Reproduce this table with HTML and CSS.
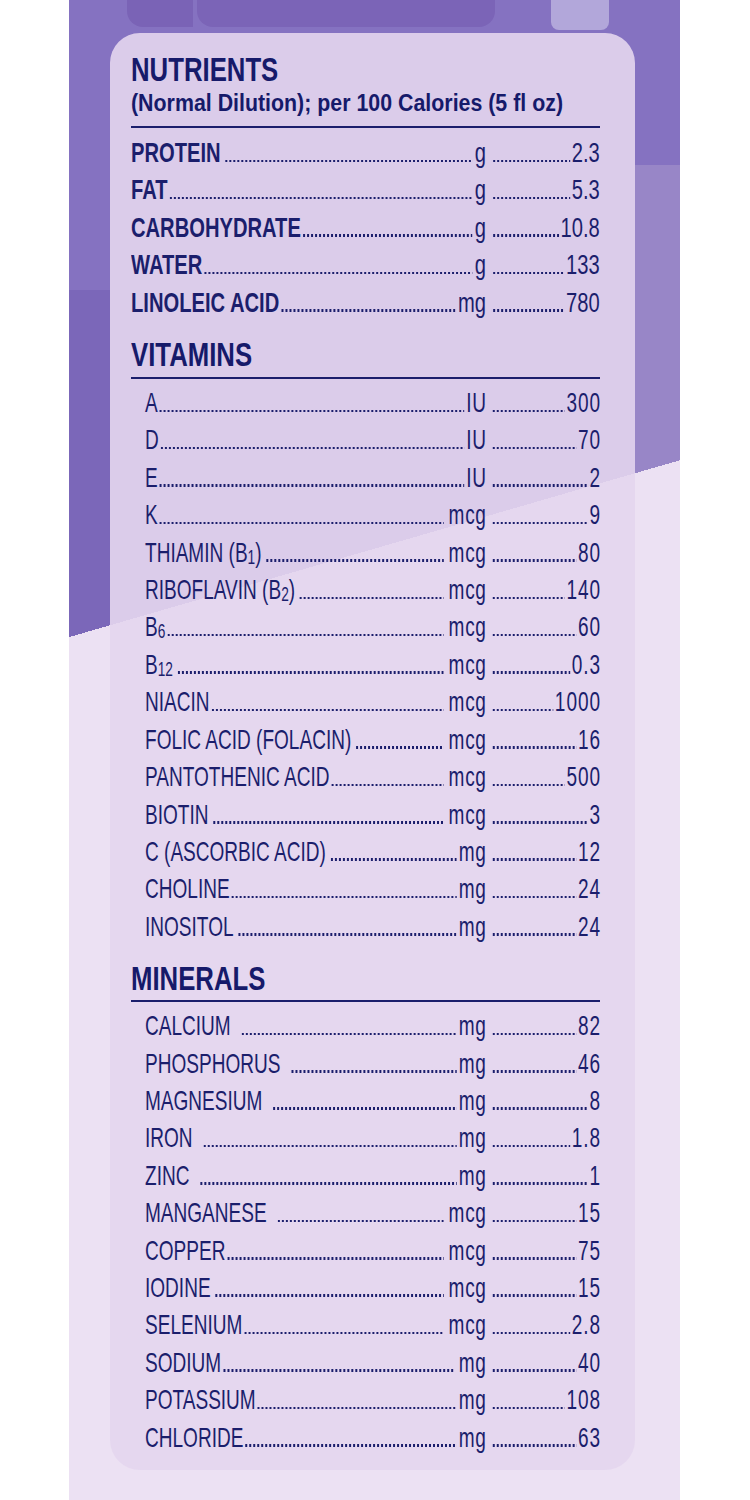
FILE: index.html
```html
<!DOCTYPE html>
<html lang="en">
<head>
<meta charset="utf-8">
<title>Nutrients</title>
<link rel="stylesheet" href="styles.css">
</head>
<body>
<div class="strip">
  <div class="deco"><span class="d1"></span><span class="d2"></span><span class="d3"></span></div>
  <div class="panel">
    <section class="sec first">
      <div class="head head-main">
        <h2>NUTRIENTS</h2>
        <p class="sub">(Normal Dilution); per 100 Calories (5 fl oz)</p>
      </div>
      <ul class="list bold">
        <li class="row"><span class="left"><span class="lbl">PROTEIN</span><span class="dots sp"></span><span class="unit">g</span></span><span class="right"><span class="dots"></span><span class="val">2.3</span></span></li>
        <li class="row"><span class="left"><span class="lbl">FAT</span><span class="dots"></span><span class="unit">g</span></span><span class="right"><span class="dots"></span><span class="val">5.3</span></span></li>
        <li class="row"><span class="left"><span class="lbl">CARBOHYDRATE</span><span class="dots"></span><span class="unit">g</span></span><span class="right"><span class="dots"></span><span class="val">10.8</span></span></li>
        <li class="row"><span class="left"><span class="lbl">WATER</span><span class="dots"></span><span class="unit">g</span></span><span class="right"><span class="dots"></span><span class="val">133</span></span></li>
        <li class="row"><span class="left"><span class="lbl">LINOLEIC ACID</span><span class="dots"></span><span class="unit">mg</span></span><span class="right"><span class="dots"></span><span class="val">780</span></span></li>
      </ul>
    </section>

    <section class="sec">
      <div class="head"><h2>VITAMINS</h2></div>
      <ul class="list ind">
        <li class="row"><span class="left"><span class="lbl">A</span><span class="dots"></span><span class="unit">IU</span></span><span class="right"><span class="dots"></span><span class="val">300</span></span></li>
        <li class="row"><span class="left"><span class="lbl">D</span><span class="dots"></span><span class="unit">IU</span></span><span class="right"><span class="dots"></span><span class="val">70</span></span></li>
        <li class="row"><span class="left"><span class="lbl">E</span><span class="dots"></span><span class="unit">IU</span></span><span class="right"><span class="dots"></span><span class="val">2</span></span></li>
        <li class="row"><span class="left"><span class="lbl">K</span><span class="dots u-sp"></span><span class="unit">mcg</span></span><span class="right"><span class="dots"></span><span class="val">9</span></span></li>
        <li class="row"><span class="left"><span class="lbl">THIAMIN (B<sub class="s">1</sub>)</span><span class="dots sp u-sp"></span><span class="unit">mcg</span></span><span class="right"><span class="dots"></span><span class="val">80</span></span></li>
        <li class="row"><span class="left"><span class="lbl">RIBOFLAVIN (B<sub class="s">2</sub>)</span><span class="dots sp u-sp"></span><span class="unit">mcg</span></span><span class="right"><span class="dots"></span><span class="val">140</span></span></li>
        <li class="row"><span class="left"><span class="lbl">B<sub class="s">6</sub></span><span class="dots u-sp"></span><span class="unit">mcg</span></span><span class="right"><span class="dots"></span><span class="val">60</span></span></li>
        <li class="row"><span class="left"><span class="lbl">B<sub class="s">12</sub></span><span class="dots sp u-sp"></span><span class="unit">mcg</span></span><span class="right"><span class="dots"></span><span class="val">0.3</span></span></li>
        <li class="row"><span class="left"><span class="lbl">NIACIN</span><span class="dots u-sp"></span><span class="unit">mcg</span></span><span class="right"><span class="dots"></span><span class="val">1000</span></span></li>
        <li class="row"><span class="left"><span class="lbl">FOLIC ACID (FOLACIN)</span><span class="dots sp u-sp"></span><span class="unit">mcg</span></span><span class="right"><span class="dots"></span><span class="val">16</span></span></li>
        <li class="row"><span class="left"><span class="lbl">PANTOTHENIC ACID</span><span class="dots u-sp"></span><span class="unit">mcg</span></span><span class="right"><span class="dots"></span><span class="val">500</span></span></li>
        <li class="row"><span class="left"><span class="lbl">BIOTIN</span><span class="dots sp u-sp"></span><span class="unit">mcg</span></span><span class="right"><span class="dots"></span><span class="val">3</span></span></li>
        <li class="row"><span class="left"><span class="lbl">C (ASCORBIC ACID)</span><span class="dots sp"></span><span class="unit">mg</span></span><span class="right"><span class="dots"></span><span class="val">12</span></span></li>
        <li class="row"><span class="left"><span class="lbl">CHOLINE</span><span class="dots"></span><span class="unit">mg</span></span><span class="right"><span class="dots"></span><span class="val">24</span></span></li>
        <li class="row"><span class="left"><span class="lbl">INOSITOL</span><span class="dots sp"></span><span class="unit">mg</span></span><span class="right"><span class="dots"></span><span class="val">24</span></span></li>
      </ul>
    </section>

    <section class="sec">
      <div class="head head-min"><h2>MINERALS</h2></div>
      <ul class="list ind">
        <li class="row"><span class="left"><span class="lbl">CALCIUM</span><span class="dots wide"></span><span class="unit">mg</span></span><span class="right"><span class="dots"></span><span class="val">82</span></span></li>
        <li class="row"><span class="left"><span class="lbl">PHOSPHORUS</span><span class="dots wide"></span><span class="unit">mg</span></span><span class="right"><span class="dots"></span><span class="val">46</span></span></li>
        <li class="row"><span class="left"><span class="lbl">MAGNESIUM</span><span class="dots wide"></span><span class="unit">mg</span></span><span class="right"><span class="dots"></span><span class="val">8</span></span></li>
        <li class="row"><span class="left"><span class="lbl">IRON</span><span class="dots wide"></span><span class="unit">mg</span></span><span class="right"><span class="dots"></span><span class="val">1.8</span></span></li>
        <li class="row"><span class="left"><span class="lbl">ZINC</span><span class="dots wide"></span><span class="unit">mg</span></span><span class="right"><span class="dots"></span><span class="val">1</span></span></li>
        <li class="row"><span class="left"><span class="lbl">MANGANESE</span><span class="dots wide u-sp"></span><span class="unit">mcg</span></span><span class="right"><span class="dots"></span><span class="val">15</span></span></li>
        <li class="row"><span class="left"><span class="lbl">COPPER</span><span class="dots u-sp"></span><span class="unit">mcg</span></span><span class="right"><span class="dots"></span><span class="val">75</span></span></li>
        <li class="row"><span class="left"><span class="lbl">IODINE</span><span class="dots sp u-sp"></span><span class="unit">mcg</span></span><span class="right"><span class="dots"></span><span class="val">15</span></span></li>
        <li class="row"><span class="left"><span class="lbl">SELENIUM</span><span class="dots u-sp"></span><span class="unit">mcg</span></span><span class="right"><span class="dots"></span><span class="val">2.8</span></span></li>
        <li class="row"><span class="left"><span class="lbl">SODIUM</span><span class="dots u-sp"></span><span class="unit">mg</span></span><span class="right"><span class="dots"></span><span class="val">40</span></span></li>
        <li class="row"><span class="left"><span class="lbl">POTASSIUM</span><span class="dots"></span><span class="unit">mg</span></span><span class="right"><span class="dots"></span><span class="val">108</span></span></li>
        <li class="row"><span class="left"><span class="lbl">CHLORIDE</span><span class="dots"></span><span class="unit">mg</span></span><span class="right"><span class="dots"></span><span class="val">63</span></span></li>
      </ul>
    </section>
  </div>
</div>
</body>
</html>
```
FILE: styles.css
```css
html, body {
  margin: 0;
  padding: 0;
  background: #ffffff;
}

body {
  font-family: "Liberation Sans", Arial, sans-serif;
  color: #1b1e6c;
}

.strip {
  margin-left: 69px;
  width: 611px;
  height: 1500px;
  overflow: hidden;
  background:
    linear-gradient(163.85deg, rgba(236, 225, 243, 0) 0 612px, #ece1f3 612px),
    linear-gradient(#9886c7, #9886c7) 566px 165px / 45px 320px no-repeat,
    linear-gradient(#7b67b9, #7b67b9) 0 290px / 41px 360px no-repeat,
    #8572c1;
}

.deco {
  display: flex;
  align-items: flex-start;
  height: 27px;
  padding-left: 58px;
}

.d1 {
  width: 66px;
  height: 27px;
  background: #7a63b6;
  border-radius: 0 0 0 16px;
}

.d2 {
  width: 298px;
  height: 27px;
  margin-left: 4px;
  background: #7b64b7;
  border-radius: 0 0 16px 16px;
}

.d3 {
  width: 58px;
  height: 30px;
  margin-left: 56px;
  background: #b2a7da;
  border-radius: 0 0 8px 8px;
}

.panel {
  box-sizing: border-box;
  width: 525px;
  height: 1437px;
  margin: 6px 0 0 41px;
  padding: 20px 35px 0 21px;
  border-radius: 30px;
  background: rgba(228, 214, 238, 0.9);
}

.sec {
  margin-top: 17px;
}

.sec.first {
  margin-top: 0;
}

.head {
  border-bottom: 2px solid #1b1e6c;
  padding-bottom: 6px;
}

.head-main {
  padding-bottom: 11px;
}

.head-min {
  padding-bottom: 5px;
}

h2 {
  margin: 0;
  font-size: 33px;
  line-height: 33px;
  font-weight: 700;
  color: #161a6a;
  transform: scaleX(0.78);
  transform-origin: 0 0;
}

.sub {
  margin: 5px 0 0;
  width: 486px;
  font-size: 24px;
  line-height: 24px;
  font-weight: 700;
  white-space: nowrap;
  color: #161a6a;
  transform: scaleX(0.89);
  transform-origin: 0 0;
}

/* regular-weight lists: condensed a bit more */
.list {
  list-style: none;
  margin: 5px 0 0;
  padding: 0;
  width: 690px;
  font-size: 28px;
  line-height: 37.4px;
  transform: scaleX(0.68);
  transform-origin: 0 0;
}

.list.bold {
  width: 651px;
  margin-top: 6px;
  transform: scaleX(0.72);
}

.row {
  display: flex;
  align-items: baseline;
}

.left {
  flex: none;
  box-sizing: border-box;
  width: 522px;
  display: flex;
  align-items: baseline;
}

.bold .left {
  width: 493px;
}

.ind .left {
  padding-left: 20.6px;
}

.lbl {
  white-space: nowrap;
}

.bold .lbl {
  font-weight: 700;
}

.s {
  font-size: 0.72em;
  line-height: 0;
  vertical-align: -0.1em;
}

.dots {
  flex: 1;
  height: 2.5px;
  margin: 0 3px 0 2px;
  background-image: linear-gradient(to right, #1b1e6c 0 2.6px, rgba(27, 30, 108, 0) 2.6px);
  background-size: 5.882px 2.5px;
  background-repeat: repeat-x;
  background-position: 1px 0;
}

.bold .dots {
  background-size: 5.556px 2.5px;
}

.dots.sp {
  margin-left: 6px;
}

.dots.wide {
  margin-left: 15px;
}

.dots.u-sp {
  margin-right: 7px;
}

.unit {
  white-space: nowrap;
  letter-spacing: 1px;
  margin-right: -1px;
}

.right {
  flex: 1;
  display: flex;
  align-items: baseline;
}

.right .dots {
  margin: 0 2px 0 9px;
}

.val {
  white-space: nowrap;
  letter-spacing: 1.5px;
  margin-right: -1.5px;
}

.bold .val,
.bold .unit {
  letter-spacing: 0;
  margin-right: 0;
}
```
